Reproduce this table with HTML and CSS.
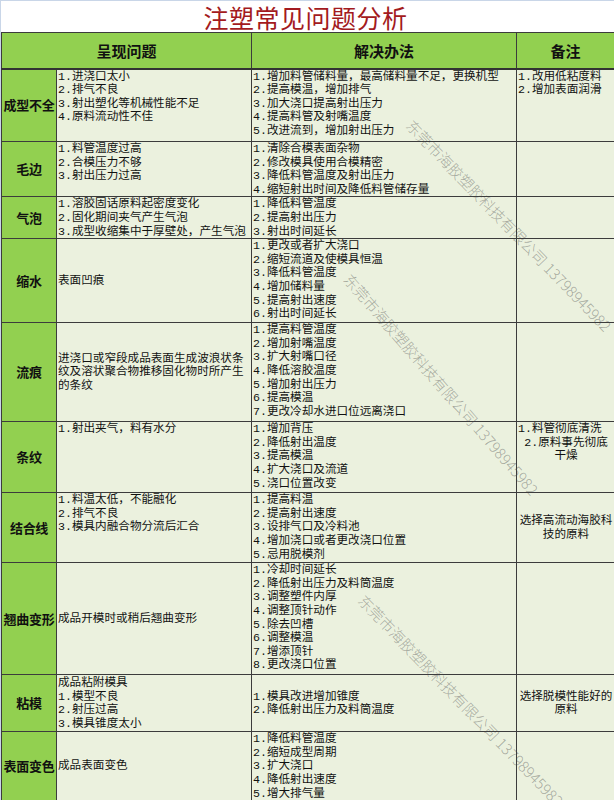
FILE: index.html
```html
<!DOCTYPE html>
<html lang="zh">
<head>
<meta charset="utf-8">
<title>注塑常见问题分析</title>
<link rel="stylesheet" href="styles.css">
</head>
<body>
<div class="page">
  <div class="title">注塑常见问题分析</div>
  <table class="grid">
    <colgroup>
      <col class="c1"><col class="c2"><col class="c3"><col class="c4">
    </colgroup>
    <thead>
      <tr class="hd">
        <th colspan="2">呈现问题</th>
        <th>解决办法</th>
        <th>备注</th>
      </tr>
    </thead>
    <tbody>
      <tr class="r1">
        <td class="label">成型不全</td>
        <td>1.进浇口太小<br>2.排气不良<br>3.射出塑化等机械性能不足<br>4.原料流动性不佳</td>
        <td>1.增加料管储料量，最高储料量不足，更换机型<br>2.提高模温，增加排气<br>3.加大浇口提高射出压力<br>4.提高料管及射嘴温度<br>5.改进流到，增加射出压力</td>
        <td>1.改用低粘度料<br>2.增加表面润滑</td>
      </tr>
      <tr class="r2">
        <td class="label">毛边</td>
        <td>1.料管温度过高<br>2.合模压力不够<br>3.射出压力过高</td>
        <td>1.清除合模表面杂物<br>2.修改模具使用合模精密<br>3.降低料管温度及射出压力<br>4.缩短射出时间及降低料管储存量</td>
        <td></td>
      </tr>
      <tr class="r3">
        <td class="label">气泡</td>
        <td>1.溶胶固话原料起密度变化<br>2.固化期间夹气产生气泡<br>3.成型收缩集中于厚壁处，产生气泡</td>
        <td>1.降低料管温度<br>2.提高射出压力<br>3.射出时间延长</td>
        <td></td>
      </tr>
      <tr class="r4">
        <td class="label">缩水</td>
        <td class="mid">表面凹痕</td>
        <td>1.更改或者扩大浇口<br>2.缩短流道及使模具恒温<br>3.降低料管温度<br>4.增加储料量<br>5.提高射出速度<br>6.射出时间延长</td>
        <td></td>
      </tr>
      <tr class="r5">
        <td class="label">流痕</td>
        <td class="mid">进浇口或窄段成品表面生成波浪状条<br>纹及溶状聚合物推移固化物时所产生<br>的条纹</td>
        <td>1.提高料管温度<br>2.增加射嘴温度<br>3.扩大射嘴口径<br>4.降低溶胶温度<br>5.增加射出压力<br>6.提高模温<br>7.更改冷却水进口位远离浇口</td>
        <td></td>
      </tr>
      <tr class="r6">
        <td class="label">条纹</td>
        <td>1.射出夹气，料有水分</td>
        <td>1.增加背压<br>2.降低射出温度<br>3.提高模温<br>4.扩大浇口及流道<br>5.浇口位置改变</td>
        <td class="center"><span class="left-line">1.料管彻底清洗</span>2.原料事先彻底<br>干燥</td>
      </tr>
      <tr class="r7">
        <td class="label">结合线</td>
        <td>1.料温太低，不能融化<br>2.排气不良<br>3.模具内融合物分流后汇合</td>
        <td>1.提高料温<br>2.提高射出速度<br>3.设排气口及冷料池<br>4.增加浇口或者更改浇口位置<br>5.忌用脱模剂</td>
        <td class="mid center">选择高流动海胶科<br>技的原料</td>
      </tr>
      <tr class="r8">
        <td class="label">翘曲变形</td>
        <td class="mid">成品开模时或稍后翘曲变形</td>
        <td>1.冷却时间延长<br>2.降低射出压力及料筒温度<br>3.调整塑件内厚<br>4.调整顶针动作<br>5.除去凹槽<br>6.调整模温<br>7.增添顶针<br>8.更改浇口位置</td>
        <td></td>
      </tr>
      <tr class="r9">
        <td class="label">粘模</td>
        <td class="mid">成品粘附模具<br>1.模型不良<br>2.射压过高<br>3.模具锥度太小</td>
        <td class="mid">1.模具改进增加锥度<br>2.降低射出压力及料筒温度</td>
        <td class="mid center">选择脱模性能好的<br>原料</td>
      </tr>
      <tr class="r10">
        <td class="label">表面变色</td>
        <td class="mid">成品表面变色</td>
        <td>1.降低料管温度<br>2.缩短成型周期<br>3.扩大浇口<br>4.降低射出速度<br>5.增大排气量</td>
        <td></td>
      </tr>
    </tbody>
  </table>

  <div class="wm wm1">东莞市海胶塑胶科技有限公司 13798945982</div>
  <div class="wm wm2">东莞市海胶塑胶科技有限公司 13798945982</div>
  <div class="wm wm3">东莞市海胶塑胶科技有限公司 13798945982</div>
</div>
</body>
</html>
```

FILE: styles.css
```css
html, body {
  margin: 0;
  padding: 0;
  background: #dfe7f1;
}

.page {
  position: relative;
  width: 614px;
  height: 800px;
  overflow: hidden;
  box-sizing: border-box;
  border-top: 1px solid #c9d6e8;
  border-left: 1px solid #c9d6e8;
  background: #dfe7f1;
  font-family: "Liberation Mono", "Noto Sans CJK SC", monospace;
  color: #111;
}

.title {
  height: 31px;
  background: #fff;
  text-align: center;
  color: #a31a20;
  font-family: "Noto Sans CJK SC", sans-serif;
  font-size: 25px;
  line-height: 33px;
  letter-spacing: 0.5px;
  padding-right: 4px;
}

.grid {
  border-collapse: collapse;
  table-layout: fixed;
  width: 613px;
}

.c1 { width: 55px; }
.c2 { width: 195px; }
.c3 { width: 265px; }
.c4 { width: 98px; }

.grid th {
  background: #92d050;
  border: 1px solid #3c3c3c;
  border-bottom: 2px solid #333;
  font-family: "Noto Sans CJK SC", sans-serif;
  font-weight: 700;
  font-size: 15px;
  color: #111;
  padding: 0;
}

.hd { height: 36px; }

.grid td {
  background: #ebf1de;
  border: 1px solid #3c3c3c;
  font-size: 11.6px;
  line-height: 13.6px;
  padding: 0 0 0 1px;
  vertical-align: top;
  white-space: nowrap;
  overflow: hidden;
}

.grid td.label {
  background: #92d050;
  font-family: "Noto Sans CJK SC", sans-serif;
  font-weight: 700;
  font-size: 13px;
  text-align: center;
  vertical-align: middle;
  padding: 0;
  letter-spacing: -0.3px;
}

.grid td.mid { vertical-align: middle; }
.grid td.center { text-align: center; }

.left-line {
  display: block;
  text-align: left;
}

.r1 { height: 73px; }
.r2 { height: 55px; }
.r3 { height: 41px; }
.r4 { height: 84px; }
.r5 { height: 99px; }
.r6 { height: 71px; }
.r7 { height: 70px; }
.r8 { height: 112px; }
.r9 { height: 57px; }
.r10 { height: 68px; }

.wm {
  position: absolute;
  white-space: nowrap;
  font-family: "Noto Sans CJK SC", sans-serif;
  font-weight: 300;
  font-size: 15px;
  line-height: 15px;
  color: rgba(70, 70, 70, 0.42);
  transform-origin: 0 0;
  pointer-events: none;
}

.wm1 { left: 414px; top: 116px; transform: rotate(46deg); }
.wm2 { left: 352px; top: 270px; transform: rotate(49deg); }
.wm3 { left: 366px; top: 591px; transform: rotate(46deg); }
```
